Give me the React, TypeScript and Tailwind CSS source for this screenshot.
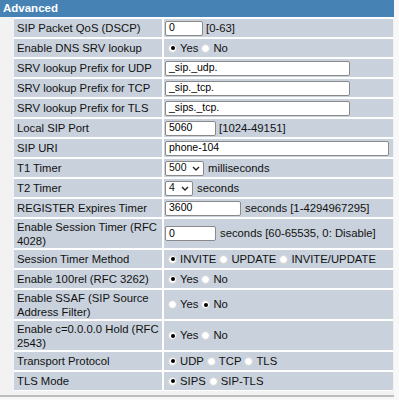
import React from "react"

const font = { fontFamily: '"Liberation Sans", Arial, sans-serif' }

const Radio = ({ on }: { on?: boolean }) => (
  <span className="inline-flex h-[9px] w-[9px] shrink-0 items-center justify-center rounded-full border border-[#d4d4d4] bg-white">
    {on && <span className="h-[4px] w-[4px] rounded-full bg-black" />}
  </span>
)

const RadioGroup = ({ options, sel }: { options: string[]; sel: number }) => (
  <div className="flex items-center pl-[4px]">
    {options.map((o, i) => (
      <span key={o} className="mr-[3px] flex items-center gap-[3px]">
        <Radio on={i === sel} />
        <span>{o}</span>
      </span>
    ))}
  </div>
)

const Input = ({ value, w }: { value: string; w: string }) => (
  <span
    className={`flex h-[15px] ${w} items-center rounded-[2px] border border-[#8a8a8a] bg-white pl-[3px] text-[10.5px] text-black`}
  >
    {value}
  </span>
)

const Select = ({ value, w }: { value: string; w: string }) => (
  <span
    className={`flex h-[15px] ${w} items-center justify-between rounded-[2px] border border-[#8a8a8a] bg-white pl-[3px] pr-[3px] text-[10.5px]`}
  >
    {value}
    <svg width="8" height="5" viewBox="0 0 8 5">
      <polyline points="1,1 4,4 7,1" fill="none" stroke="#222" strokeWidth="1.4" />
    </svg>
  </span>
)

type Row = { label: React.ReactNode; value: React.ReactNode; tall?: boolean }

const rows: Row[] = [
  {
    label: "SIP Packet QoS (DSCP)",
    value: (
      <div className="flex items-center gap-[3px] pl-[1px]">
        <Input value="0" w="w-[38px]" />
        <span>[0-63]</span>
      </div>
    ),
  },
  { label: "Enable DNS SRV lookup", value: <RadioGroup options={["Yes", "No"]} sel={0} /> },
  { label: "SRV lookup Prefix for UDP", value: <div className="pl-[1px]"><Input value="_sip._udp." w="w-[185px]" /></div> },
  { label: "SRV lookup Prefix for TCP", value: <div className="pl-[1px]"><Input value="_sip._tcp." w="w-[185px]" /></div> },
  { label: "SRV lookup Prefix for TLS", value: <div className="pl-[1px]"><Input value="_sips._tcp." w="w-[185px]" /></div> },
  {
    label: "Local SIP Port",
    value: (
      <div className="flex items-center gap-[3px] pl-[1px]">
        <Input value="5060" w="w-[51px]" />
        <span>[1024-49151]</span>
      </div>
    ),
  },
  { label: "SIP URI", value: <div className="pl-[1px]"><Input value="phone-104" w="w-[224px]" /></div> },
  {
    label: "T1 Timer",
    value: (
      <div className="flex items-center gap-[4px] pl-[1px]">
        <Select value="500" w="w-[39px]" />
        <span>milliseconds</span>
      </div>
    ),
  },
  {
    label: "T2 Timer",
    value: (
      <div className="flex items-center gap-[4px] pl-[1px]">
        <Select value="4" w="w-[28px]" />
        <span>seconds</span>
      </div>
    ),
  },
  {
    label: "REGISTER Expires Timer",
    value: (
      <div className="flex items-center gap-[4px] pl-[1px]">
        <Input value="3600" w="w-[76px]" />
        <span>seconds [1-4294967295]</span>
      </div>
    ),
  },
  {
    label: "Enable Session Timer (RFC 4028)",
    tall: true,
    value: (
      <div className="flex items-center gap-[4px] pl-[1px]">
        <Input value="0" w="w-[51px]" />
        <span>seconds [60-65535, 0: Disable]</span>
      </div>
    ),
  },
  {
    label: "Session Timer Method",
    value: <RadioGroup options={["INVITE", "UPDATE", "INVITE/UPDATE"]} sel={0} />,
  },
  { label: "Enable 100rel (RFC 3262)", value: <RadioGroup options={["Yes", "No"]} sel={0} /> },
  {
    label: "Enable SSAF (SIP Source Address Filter)",
    tall: true,
    value: <RadioGroup options={["Yes", "No"]} sel={1} />,
  },
  {
    label: "Enable c=0.0.0.0 Hold (RFC 2543)",
    tall: true,
    value: <RadioGroup options={["Yes", "No"]} sel={0} />,
  },
  { label: "Transport Protocol", value: <RadioGroup options={["UDP", "TCP", "TLS"]} sel={0} /> },
  { label: "TLS Mode", value: <RadioGroup options={["SIPS", "SIP-TLS"]} sel={0} /> },
]

export default function App() {
  return (
    <div className="h-[400px] w-[399px] overflow-hidden bg-[#f8f8f8] text-[11.3px] text-[#111]" style={font}>
      <div className="h-[397px] w-[394px] border-b-[2px] border-[#bdbdbd] bg-[#f2f2f2]">
        <div className="flex h-[17px] items-center bg-[#4682b4] pl-[3px] text-[11.5px] font-bold text-white">
          Advanced
        </div>
        <div className="ml-[14px] flex w-[379px] flex-col gap-[2px] bg-white pt-[2px] pb-[1px]">
          {rows.map((r, i) => (
            <div
              key={i}
              className={`grid grid-cols-[148px_1fr] gap-[2px] ${r.tall ? "h-[29px]" : "h-[18px]"}`}
            >
              <div className="flex items-center bg-[#c9d1dc] pl-[3px] pr-[2px] leading-[14px]">{r.label}</div>
              <div className="flex items-center bg-[#c9d1dc]">{r.value}</div>
            </div>
          ))}
        </div>
      </div>
    </div>
  )
}
